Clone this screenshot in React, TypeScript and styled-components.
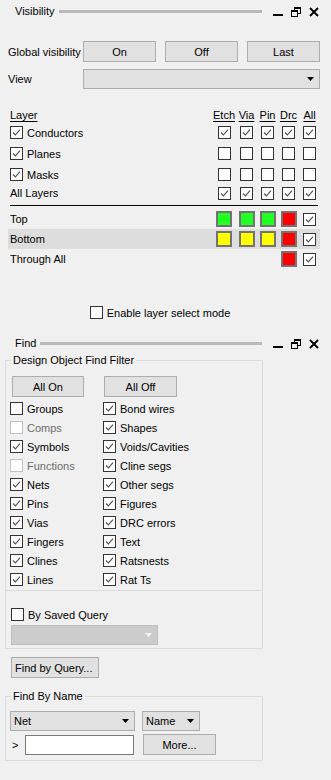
import React from "react";
import styled, { createGlobalStyle } from "styled-components";

const GlobalStyle = createGlobalStyle`
  html, body { margin: 0; padding: 0; background: #f0f0f0; }
  body {
    font-family: "Liberation Sans", Arial, sans-serif;
    font-size: 11px;
    color: #000;
  }
  * { box-sizing: border-box; }
`;

const Page = styled.div`
  width: 331px;
  height: 780px;
  background: #f0f0f0;
  overflow: hidden;
`;

/* ---------- dock title ---------- */
const TitleBar = styled.div`
  display: flex;
  align-items: center;
  height: 22px;
  padding: 0 12px 0 15px;
`;
const TitleText = styled.span`
  line-height: 13px;
`;
const TitleLine = styled.div`
  flex: 1;
  height: 3px;
  background: #b9b9b9;
  margin: 0 11px 0 4px;
`;
const WinIcons = styled.div`
  display: flex;
  gap: 8px;
  margin-top: 2px;
`;

const DockTitle = ({ title }: { title: string }) => (
  <TitleBar>
    <TitleText>{title}</TitleText>
    <TitleLine />
    <WinIcons>
      <svg width="10" height="10" viewBox="0 0 10 10">
        <rect x="0" y="7" width="10" height="2" fill="#000" />
      </svg>
      <svg width="10" height="10" viewBox="0 0 10 10">
        <rect x="3.5" y="0.5" width="6" height="6" fill="none" stroke="#000" />
        <rect x="3" y="0" width="7" height="2" fill="#000" />
        <rect x="0.5" y="3.5" width="6" height="6" fill="#f0f0f0" stroke="#000" />
        <rect x="0" y="3" width="7" height="2" fill="#000" />
      </svg>
      <svg width="10" height="10" viewBox="0 0 10 10">
        <path d="M1 1 L9 9 M9 1 L1 9" stroke="#000" strokeWidth="1.8" />
      </svg>
    </WinIcons>
  </TitleBar>
);

/* ---------- basic controls ---------- */
const Button = styled.div<{ $w: number; $left?: boolean }>`
  width: ${(p) => p.$w}px;
  height: 21px;
  background: #e1e1e1;
  border: 1px solid #adadad;
  display: flex;
  align-items: center;
  justify-content: ${(p) => (p.$left ? "flex-start" : "center")};
  padding-left: ${(p) => (p.$left ? "3px" : "0")};
  flex: none;
`;

const ComboBox = styled.div<{ $w: number; $disabled?: boolean }>`
  width: ${(p) => p.$w}px;
  height: 20px;
  background: ${(p) => (p.$disabled ? "#cccccc" : "#e1e1e1")};
  border: 1px solid ${(p) => (p.$disabled ? "#bfbfbf" : "#adadad")};
  display: flex;
  align-items: center;
  justify-content: space-between;
  padding: 0 5px 0 3px;
  flex: none;
`;

const Arrow = ({ color = "#000" }: { color?: string }) => (
  <svg width="7" height="4" viewBox="0 0 7 4">
    <path d="M0 0 L7 0 L3.5 4 Z" fill={color} />
  </svg>
);

const Combo = ({ w, text, disabled }: { w: number; text?: string; disabled?: boolean }) => (
  <ComboBox $w={w} $disabled={disabled}>
    <span>{text}</span>
    <Arrow color={disabled ? "#f4f4f4" : "#000"} />
  </ComboBox>
);

const Box = styled.span<{ $disabled?: boolean }>`
  display: inline-flex;
  width: 13px;
  height: 13px;
  border: 1px solid ${(p) => (p.$disabled ? "#c2c2c2" : "#333333")};
  background: #fff;
  flex: none;
`;

const Check = ({ on, disabled }: { on?: boolean; disabled?: boolean }) => (
  <Box $disabled={disabled}>
    {on && (
      <svg width="11" height="11" viewBox="0 0 11 11">
        <path d="M2 5.5 L4.4 7.9 L9 2.6" fill="none" stroke="#555" strokeWidth="1.2" />
      </svg>
    )}
  </Box>
);

const Item = styled.div<{ $h?: number; $disabled?: boolean }>`
  display: flex;
  align-items: center;
  gap: 4px;
  height: ${(p) => p.$h ?? 19}px;
  color: ${(p) => (p.$disabled ? "#6d6d6d" : "#000")};
  white-space: nowrap;
`;

/* ---------- visibility panel ---------- */
const FormRow = styled.div<{ $mt: number }>`
  display: grid;
  grid-template-columns: 66px 73px 73px 73px;
  column-gap: 9px;
  align-items: center;
  padding-left: 8px;
  margin-top: ${(p) => p.$mt}px;
  white-space: nowrap;
`;
const ViewRow = styled.div`
  display: flex;
  align-items: center;
  padding-left: 8px;
  margin-top: 7px;
`;
const RowLabel = styled.span`
  width: 75px;
  flex: none;
`;

const LayerTable = styled.div`
  padding: 0 11px 0 8px;
  margin-top: 19px;
`;
const LayerRow = styled.div<{ $h: number; $hl?: boolean }>`
  display: grid;
  grid-template-columns: 1fr 24px 21px 21px 21px 21px;
  align-items: center;
  justify-items: center;
  height: ${(p) => p.$h}px;
  background: ${(p) => (p.$hl ? "#dddddd" : "transparent")};
`;
const LayerName = styled.div`
  justify-self: start;
  display: flex;
  align-items: center;
  gap: 4px;
  padding-left: 2px;
`;
const Under = styled.span`
  text-decoration: underline;
  text-underline-offset: 2px;
`;
const Rule = styled.div`
  height: 1px;
  background: #000;
  margin: 4px 2px 3px;
`;
const Swatch = styled.span<{ $c: string }>`
  width: 16px;
  height: 16px;
  border: 2px solid #737373;
  background: ${(p) => p.$c};
`;
const EnableRow = styled.div`
  display: flex;
  justify-content: center;
  padding-right: 11px;
  margin: 37px 0 13px;
`;

/* ---------- find panel ---------- */
const Group = styled.fieldset`
  margin: 0 0 0 5px;
  width: 258px;
  border: 1px solid #dcdcdc;
  padding: 0;
  min-width: 0;
`;
const Legend = styled.legend`
  margin-left: 5px;
  padding: 0 2px;
  line-height: 13px;
`;
const BtnRow = styled.div`
  display: grid;
  grid-template-columns: 92px 92px;
  padding: 9px 0 0 6px;
`;
const FilterGrid = styled.div`
  display: grid;
  grid-template-columns: 93px 1fr;
  padding: 2px 0 1px 4px;
`;
const SavedSection = styled.div`
  border-top: 1px solid #dcdcdc;
  padding: 17px 0 3px 5px;
  display: flex;
  flex-direction: column;
  gap: 4px;
`;
const QueryBtnWrap = styled.div`
  padding-left: 11px;
  margin: 8px 0 12px;
`;
const NameRows = styled.div`
  display: flex;
  flex-direction: column;
  gap: 3px;
  padding: 8px 0 5px 4px;
`;
const NameRow = styled.div<{ $gap: number }>`
  display: flex;
  align-items: center;
  gap: ${(p) => p.$gap}px;
`;
const Prompt = styled.span`
  width: 15px;
  padding-left: 2px;
`;
const TextInput = styled.div`
  width: 109px;
  height: 20px;
  background: #fff;
  border: 1px solid #7a7a7a;
  margin-right: 9px;
`;

const layers = [
  { name: "Conductors", cols: [1, 1, 1, 1, 1] },
  { name: "Planes", cols: [0, 0, 0, 0, 0] },
  { name: "Masks", cols: [0, 0, 0, 0, 0] },
];

const G = "#22ff22";
const Y = "#ffff00";
const R = "#ff0000";
const sides = [
  { name: "Top", sw: [G, G, G, R] },
  { name: "Bottom", sw: [Y, Y, Y, R], hl: true },
  { name: "Through All", sw: [null, null, null, R] },
];

const leftItems: [string, boolean, boolean?][] = [
  ["Groups", false],
  ["Comps", false, true],
  ["Symbols", true],
  ["Functions", false, true],
  ["Nets", true],
  ["Pins", true],
  ["Vias", true],
  ["Fingers", true],
  ["Clines", true],
  ["Lines", true],
];
const rightItems = [
  "Bond wires",
  "Shapes",
  "Voids/Cavities",
  "Cline segs",
  "Other segs",
  "Figures",
  "DRC errors",
  "Text",
  "Ratsnests",
  "Rat Ts",
];

export default function App() {
  return (
    <Page>
      <GlobalStyle />
      <DockTitle title="Visibility" />

      <FormRow $mt={19}>
        <span>Global visibility</span>
        <Button $w={73}>On</Button>
        <Button $w={73}>Off</Button>
        <Button $w={73}>Last</Button>
      </FormRow>
      <ViewRow>
        <RowLabel>View</RowLabel>
        <Combo w={237} />
      </ViewRow>

      <LayerTable>
        <LayerRow $h={14}>
          <LayerName>
            <Under>Layer</Under>
          </LayerName>
          {["Etch", "Via", "Pin", "Drc", "All"].map((c) => (
            <Under key={c}>{c}</Under>
          ))}
        </LayerRow>
        {layers.map((l) => (
          <LayerRow $h={21} key={l.name}>
            <LayerName>
              <Check on />
              {l.name}
            </LayerName>
            {l.cols.map((v, i) => (
              <Check key={i} on={!!v} />
            ))}
          </LayerRow>
        ))}
        <LayerRow $h={16}>
          <LayerName>All Layers</LayerName>
          {[0, 1, 2, 3, 4].map((i) => (
            <Check key={i} on />
          ))}
        </LayerRow>
        <Rule />
        {sides.map((s) => (
          <LayerRow $h={20} $hl={s.hl} key={s.name}>
            <LayerName>{s.name}</LayerName>
            {s.sw.map((c, i) => (c ? <Swatch key={i} $c={c} /> : <span key={i} />))}
            <Check on />
          </LayerRow>
        ))}
      </LayerTable>

      <EnableRow>
        <Item $h={13}>
          <Check />
          Enable layer select mode
        </Item>
      </EnableRow>

      <DockTitle title="Find" />

      <Group>
        <Legend>Design Object Find Filter</Legend>
        <BtnRow>
          <Button $w={72}>All On</Button>
          <Button $w={73}>All Off</Button>
        </BtnRow>
        <FilterGrid>
          {leftItems.map(([name, on, dis], i) => (
            <React.Fragment key={name}>
              <Item $disabled={dis}>
                <Check on={on} disabled={dis} />
                {name}
              </Item>
              <Item>
                <Check on />
                {rightItems[i]}
              </Item>
            </React.Fragment>
          ))}
        </FilterGrid>
        <SavedSection>
          <Item $h={13}>
            <Check />
            By Saved Query
          </Item>
          <Combo w={147} disabled />
        </SavedSection>
      </Group>

      <QueryBtnWrap>
        <Button $w={88} $left>
          Find by Query...
        </Button>
      </QueryBtnWrap>

      <Group>
        <Legend>Find By Name</Legend>
        <NameRows>
          <NameRow $gap={7}>
            <Combo w={125} text="Net" />
            <Combo w={58} text="Name" />
          </NameRow>
          <NameRow $gap={0}>
            <Prompt>&gt;</Prompt>
            <TextInput />
            <Button $w={73}>More...</Button>
          </NameRow>
        </NameRows>
      </Group>
    </Page>
  );
}
